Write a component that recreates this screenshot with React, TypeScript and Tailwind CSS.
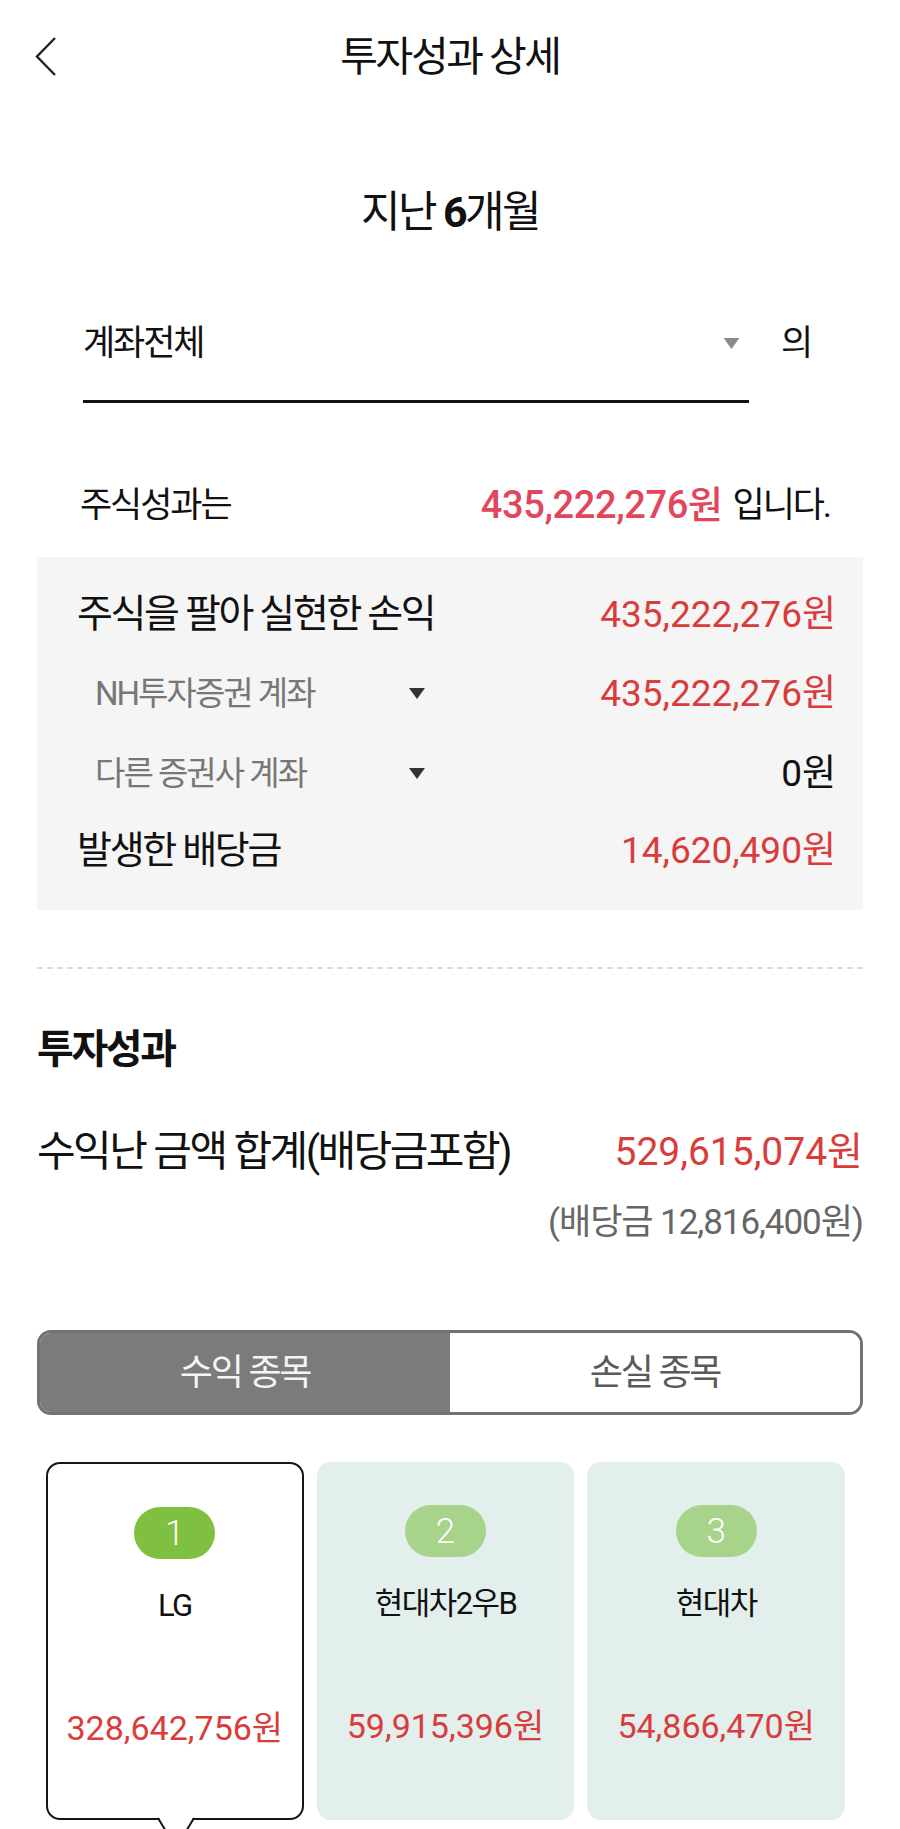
import React from 'react';

const stocks = [
  { rank: 1, name: 'LG', amount: '328,642,756원', active: true },
  { rank: 2, name: '현대차2우B', amount: '59,915,396원', active: false },
  { rank: 3, name: '현대차', amount: '54,866,470원', active: false },
];

function Chevron() {
  return (
    <svg width="24" height="42" viewBox="0 0 24 42" fill="none">
      <polyline points="20,2 2,20.5 20,39" stroke="#222" strokeWidth="2.4" strokeLinejoin="miter" />
    </svg>
  );
}

function DownTriangle({ className }: { className: string }) {
  return (
    <svg className={className} viewBox="0 0 20 14">
      <polygon points="0,0 20,0 10,14" fill="currentColor" />
    </svg>
  );
}

export default function App() {
  return (
    <div className="w-[900px] h-[1829px] overflow-hidden bg-white text-[#111] font-['Roboto','Noto_Sans_CJK_KR',sans-serif] leading-none">
      {/* Header */}
      <header className="flex h-[114px] items-center">
        <div className="w-[100px] pl-[35px] flex items-center">
          <Chevron />
        </div>
        <h1 className="flex-1 text-center text-[41px] tracking-[-0.06em] font-normal">투자성과 상세</h1>
        <div className="w-[100px]" />
      </header>

      {/* Period */}
      <div className="mt-[70px] h-[56px] flex items-center justify-center text-[43px] tracking-[-0.06em]">
        지난&nbsp;<span className="font-bold">6</span>개월
      </div>

      {/* Account select */}
      <div className="mt-[75px] flex pl-[83px]">
        <div className="w-[666px] border-b-[3px] border-[#111] pb-[29px]">
          <div className="h-[56px] flex items-center justify-between pr-[6px]">
            <span className="text-[35px] tracking-[-0.06em]">계좌전체</span>
            <DownTriangle className="w-[23px] h-[11px] text-[#8a8a8a]" />
          </div>
        </div>
        <div className="h-[56px] flex items-center ml-[32px] text-[35px]">의</div>
      </div>

      {/* Summary sentence */}
      <div className="mt-[74px] h-[56px] flex items-center justify-between pl-[80px] pr-[70px]">
        <span className="text-[35px] tracking-[-0.06em]">주식성과는</span>
        <span className="flex items-center gap-[10px]">
          <span className="text-[38px] font-medium text-[#e2465a] tracking-[-0.01em]">435,222,276원</span>
          <span className="text-[35px] tracking-[-0.06em]">입니다.</span>
        </span>
      </div>

      {/* Breakdown box */}
      <div className="mt-[24px] mx-[37px] bg-[#f5f5f5] pt-[18px] pb-[23px] pl-[40px] pr-[27px]">
        <div className="h-[78px] flex items-center justify-between">
          <span className="text-[39px] tracking-[-0.06em]">주식을 팔아 실현한 손익</span>
          <span className="text-[37px] text-[#d93c3a]">435,222,276원</span>
        </div>
        <div className="h-[80px] flex items-center justify-between pl-[18px]">
          <div className="flex items-center">
            <span className="w-[314px] text-[33px] text-[#777] tracking-[-0.06em]">NH투자증권 계좌</span>
            <DownTriangle className="w-[16px] h-[13px] text-[#333]" />
          </div>
          <span className="text-[37px] text-[#d93c3a]">435,222,276원</span>
        </div>
        <div className="h-[80px] flex items-center justify-between pl-[18px]">
          <div className="flex items-center">
            <span className="w-[314px] text-[33px] text-[#777] tracking-[-0.06em]">다른 증권사 계좌</span>
            <DownTriangle className="w-[16px] h-[13px] text-[#333]" />
          </div>
          <span className="text-[37px]">0원</span>
        </div>
        <div className="h-[74px] flex items-center justify-between">
          <span className="text-[38px] tracking-[-0.06em]">발생한 배당금</span>
          <span className="text-[37px] text-[#d93c3a]">14,620,490원</span>
        </div>
      </div>

      <div className="mt-[57px] mx-[37px] border-t-2 border-dashed border-[#dcdcdc]" />

      {/* Performance */}
      <div className="px-[37px]">
        <h2 className="mt-[53px] h-[56px] flex items-center text-[40px] font-bold tracking-[-0.06em]">투자성과</h2>
        <div className="mt-[46px] h-[56px] flex items-center justify-between">
          <span className="text-[42px] tracking-[-0.06em]">수익난 금액 합계(배당금포함)</span>
          <span className="text-[39px] text-[#d93c3a]">529,615,074원</span>
        </div>
        <div className="mt-[20px] h-[44px] flex items-center justify-end text-[35px] text-[#666] tracking-[-0.03em]">
          (배당금 12,816,400원)
        </div>

        {/* Tabs */}
        <div className="mt-[86px] h-[85px] grid grid-cols-2 border-[3px] border-[#727272] rounded-[14px] overflow-hidden">
          <div className="bg-[#7b7b7b] flex items-center justify-center text-[36px] text-[#f4f4f4] tracking-[-0.06em]">수익 종목</div>
          <div className="bg-white flex items-center justify-center text-[36px] text-[#5a5a5a] tracking-[-0.06em]">손실 종목</div>
        </div>

        {/* Top stocks */}
        <div className="mt-[47px] ml-[9px] w-[799px] grid grid-cols-3 gap-[13px]">
          {stocks.map((s) => (
            <div
              key={s.rank}
              className={`relative h-[358px] rounded-[14px] flex flex-col items-center pt-[43px] ${
                s.active ? 'bg-white border-2 border-[#151515]' : 'bg-[#e2efec]'
              }`}
            >
              <div
                className={`w-[81px] h-[52px] rounded-full flex items-center justify-center text-[35px] font-light text-white ${
                  s.rank === 1 ? 'bg-[#7fc041]' : 'bg-[#a7d38a]'
                }`}
              >
                {s.rank}
              </div>
              <div className="mt-[26px] h-[40px] flex items-center text-[31px] tracking-[-0.05em]">{s.name}</div>
              <div className="mt-[81px] h-[44px] flex items-center text-[34px] text-[#d93c3a]">{s.amount}</div>
              {s.active && (
                <svg className="absolute left-[108px] bottom-[-32px]" width="40" height="34" viewBox="0 0 40 34">
                  <polygon points="2,0 38,0 20,32" fill="white" />
                  <polyline points="2,2 20,32 38,2" fill="none" stroke="#151515" strokeWidth="2" />
                </svg>
              )}
            </div>
          ))}
        </div>
      </div>
    </div>
  );
}
